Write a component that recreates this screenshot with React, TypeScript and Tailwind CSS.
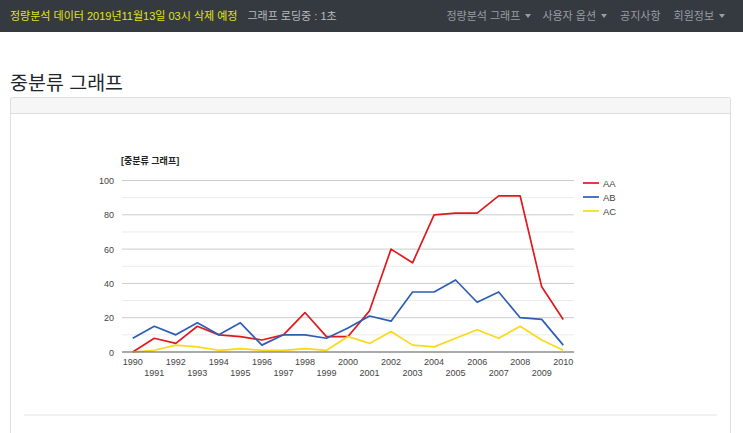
import React from 'react';

const years = Array.from({ length: 21 }, (_, i) => 1990 + i);

const series = [
  {
    name: 'AA',
    color: '#e0191f',
    data: [0, 8, 5, 15, 10, 9, 7, 10, 23, 9, 9, 24, 60, 52, 80, 81, 81, 91, 91, 38, 19],
  },
  {
    name: 'AB',
    color: '#2d5eb5',
    data: [8, 15, 10, 17, 10, 17, 4, 10, 10, 8, 14, 21, 18, 35, 35, 42, 29, 35, 20, 19, 4],
  },
  {
    name: 'AC',
    color: '#fcd916',
    data: [0, 1, 4, 3, 1, 2, 1, 1, 2, 1, 9, 5, 12, 4, 3, 8, 13, 8, 15, 7, 1],
  },
];

// plot area inside the svg
const PX = 98;
const PW = 452;
const PY = 66.5;
const PH = 171.5;
const step = PW / years.length;
const xAt = (i: number) => PX + step * (i + 0.5);
const yAt = (v: number) => PY + PH - (v / 100) * PH;

const Caret = () => (
  <span className="ml-[5px] inline-block h-0 w-0 border-x-[3.5px] border-t-[4px] border-x-transparent border-t-current align-middle" />
);

const Navbar = () => {
  return (
    <nav className="flex h-8 items-center justify-between bg-[#343a40] pl-[10px] pr-[18px] text-[11px]">
      <div className="flex items-center">
        <span className="text-[#e3e31a]">정량분석 데이터 2019년11월13일 03시 삭제 예정</span>
        <span className="ml-[10px] text-[#b9bbbd]">그래프 로딩중 : 1초</span>
      </div>
      <ul className="flex items-center gap-[11px] text-[#9a9da1]">
        <li className="flex items-center">
          정량분석 그래프
          <Caret />
        </li>
        <li className="flex items-center">
          사용자 옵션
          <Caret />
        </li>
        <li className="mx-[2px]">공지사항</li>
        <li className="flex items-center">
          회원정보
          <Caret />
        </li>
      </ul>
    </nav>
  );
};

const Chart = () => {
  const grid = [0, 10, 20, 30, 40, 50, 60, 70, 80, 90, 100];
  return (
    <svg width="693" height="300" className="block" style={{ fontFamily: '"Liberation Sans", "Noto Sans CJK KR", sans-serif' }}>
      <text x={97} y={50} fontSize="9" fontWeight="bold" fill="#222">
        [중분류 그래프]
      </text>
      {grid.map((g) =>
        g === 0 ? null : (
          <line
            key={g}
            x1={PX}
            x2={PX + PW}
            y1={yAt(g)}
            y2={yAt(g)}
            stroke={g % 20 === 0 ? '#cccccc' : '#ebebeb'}
            strokeWidth="1"
          />
        )
      )}
      {[0, 20, 40, 60, 80, 100].map((g) => (
        <text key={g} x={90} y={yAt(g) + 3.5} fontSize="9" fill="#444" textAnchor="end">
          {g}
        </text>
      ))}
      {series.map((s) => (
        <polyline
          key={s.name}
          fill="none"
          stroke={s.color}
          strokeWidth="1.7"
          strokeLinejoin="round"
          points={s.data.map((v, i) => `${xAt(i)},${yAt(v)}`).join(' ')}
        />
      ))}
      <line x1={PX} x2={PX + PW} y1={yAt(0)} y2={yAt(0)} stroke="#555" strokeWidth="1" />
      {years.map((y, i) => (
        <text
          key={y}
          x={xAt(i)}
          y={i % 2 === 0 ? 250.5 : 262}
          fontSize="9"
          fill="#444"
          textAnchor="middle"
        >
          {y}
        </text>
      ))}
      {series.map((s, i) => (
        <g key={s.name}>
          <line x1={559} x2={575} y1={69 + i * 14} y2={69 + i * 14} stroke={s.color} strokeWidth="1.7" />
          <text x={579} y={72.5 + i * 14} fontSize="9.5" fill="#444">
            {s.name}
          </text>
        </g>
      ))}
    </svg>
  );
};

const App = () => {
  return (
    <div className="h-[433px] overflow-hidden bg-white font-['Liberation_Sans','Noto_Sans_CJK_KR',sans-serif] text-[#212529]">
      <Navbar />
      <div className="px-[10px] pt-[39px]">
        <h2 className="mb-[2px] text-[19.5px] leading-[24px]">중분류 그래프</h2>
        <div className="w-[721px] rounded-[2px] border border-[#dfdfdf]">
          <div className="h-[16px] border-b border-[#dfdfdf] bg-[#f6f6f6]" />
          <div className="px-[13px]">
            <Chart />
            <div className="border-t-2 border-[#f1f1f1] pb-[60px]" />
          </div>
        </div>
      </div>
    </div>
  );
};

export default App;
